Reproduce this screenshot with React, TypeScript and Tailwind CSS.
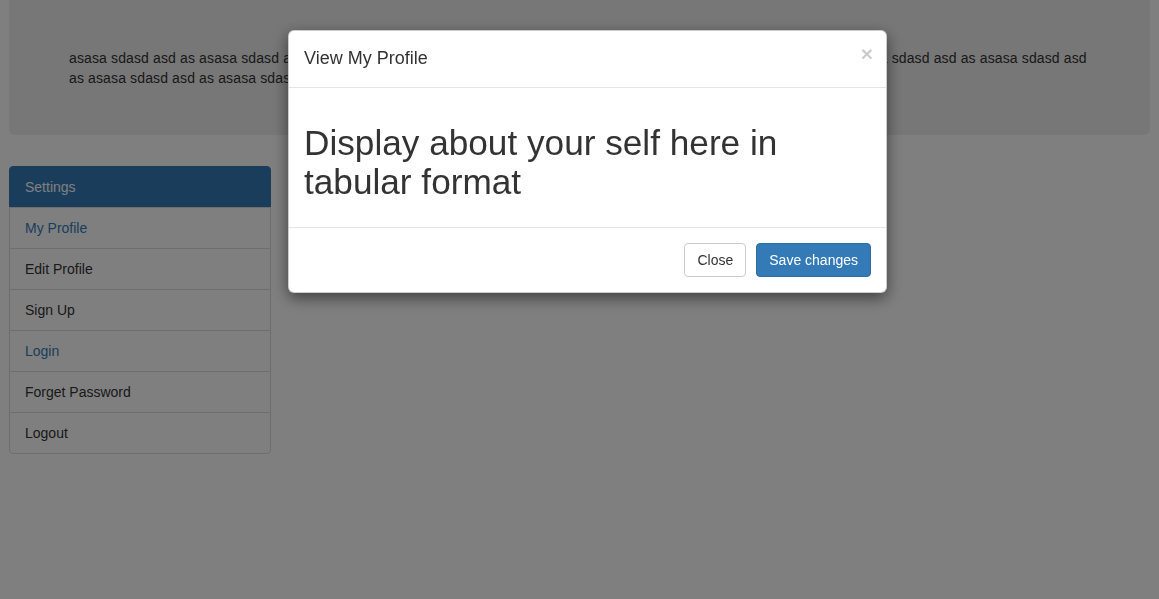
export default function App() {
  const text = Array(13).fill("asasa sdasd asd as").join(" ");
  const items: { label: string; link?: boolean }[] = [
    { label: "My Profile", link: true },
    { label: "Edit Profile" },
    { label: "Sign Up" },
    { label: "Login", link: true },
    { label: "Forget Password" },
    { label: "Logout" },
  ];
  return (
    <div className="relative min-h-[599px] bg-white text-[14px] leading-[20px] text-[#333] font-['Liberation_Sans',Arial,sans-serif]">
      <div className="px-[9px]">
        <div className="bg-[#eee] rounded-b-[6px] pt-[48px] pb-[47px] px-[60px]">
          <p className="tracking-[0.13px]">{text}</p>
        </div>
        <div className="mt-[31px] w-[262px]">
          <div className="-mb-px border border-[#337ab7] bg-[#337ab7] text-white px-[15px] py-[10px] rounded-t-[4px]">
            Settings
          </div>
          {items.map((it, i) => (
            <div
              key={it.label}
              className={
                "-mb-px border border-[#ddd] bg-white px-[15px] py-[10px] " +
                (it.link ? "text-[#337ab7] " : "text-[#333] ") +
                (i === items.length - 1 ? "rounded-b-[4px]" : "")
              }
            >
              {it.label}
            </div>
          ))}
        </div>
      </div>

      <div className="fixed inset-0 bg-black/50" />
      <div className="fixed inset-0 pl-[288px] pt-[30px]">
        <div className="w-[599px] bg-white border border-[rgba(0,0,0,0.2)] rounded-[6px] shadow-[0_5px_15px_rgba(0,0,0,0.5)]">
          <div className="flex items-start justify-between p-[15px] border-b border-[#e5e5e5]">
            <h4 className="text-[18px] leading-[25.7px] text-[#333]">View My Profile</h4>
            <button className="text-[21px] font-bold leading-none text-black opacity-20 -mt-[3px] -mr-[2px]">
              ×
            </button>
          </div>
          <div className="p-[15px]">
            <h1 className="mt-[20px] mb-[10px] text-[35.2px] leading-[39.6px] text-[#333]">
              Display about your self here in tabular format
            </h1>
          </div>
          <div className="flex justify-end gap-[10px] p-[15px] border-t border-[#e5e5e5]">
            <button className="px-[12px] py-[6px] text-[14px] leading-[20px] border border-[#ccc] rounded-[4px] bg-white text-[#333]">
              Close
            </button>
            <button className="px-[12px] py-[6px] text-[14px] leading-[20px] border border-[#2e6da4] rounded-[4px] bg-[#337ab7] text-white">
              Save changes
            </button>
          </div>
        </div>
      </div>
    </div>
  );
}
